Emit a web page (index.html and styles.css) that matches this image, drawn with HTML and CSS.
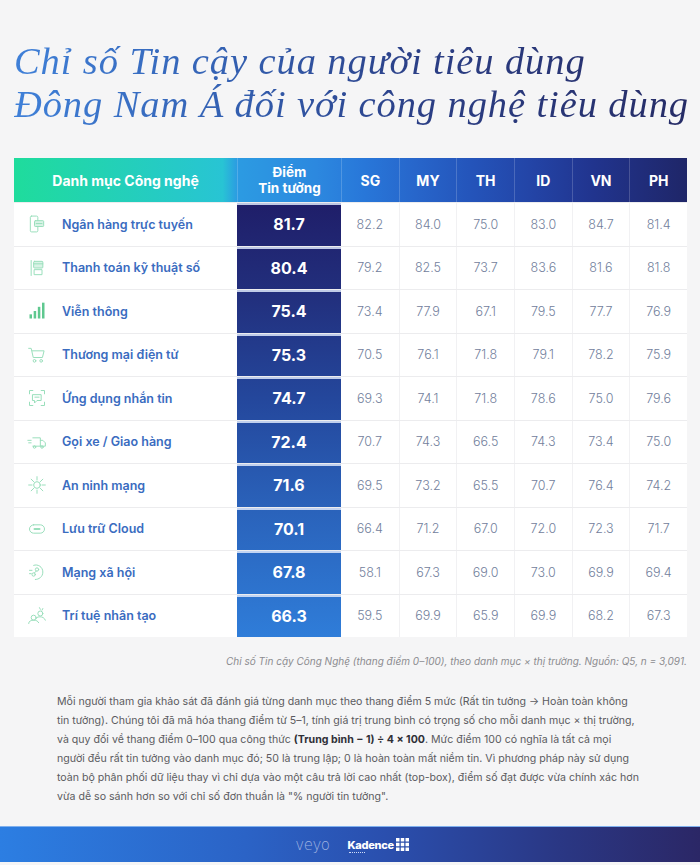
FILE: index.html
```html
<!DOCTYPE html>
<html lang="vi">
<head>
<meta charset="utf-8">
<title>Chỉ số Tin cậy</title>
<link rel="stylesheet" href="styles.css">
</head>
<body>
<div class="page">
  <h1 class="title"><span class="t-line">Chỉ số Tin cậy của người tiêu dùng</span><span class="t-line">Đông Nam Á đối với công nghệ tiêu dùng</span></h1>

  <div class="table">
    <div class="row head">
      <div class="cell cat-h">Danh mục Công nghệ</div>
      <div class="cell score-h">Điểm<br>Tin tưởng</div>
      <div class="cell c-h">SG</div>
      <div class="cell c-h">MY</div>
      <div class="cell c-h">TH</div>
      <div class="cell c-h">ID</div>
      <div class="cell c-h">VN</div>
      <div class="cell c-h">PH</div>
    </div>

    <div class="body">
      <div class="row">
        <div class="cell cat"><svg class="ico" viewBox="0 0 24 24"><rect x="4" y="2.5" width="9" height="19" rx="1.5"/><rect x="9" y="8" width="11" height="7" rx="1" class="fill"/><path d="M11 11.5h7"/></svg><span>Ngân hàng trực tuyến</span></div>
        <div class="cell score">81.7</div>
        <div class="cell num">82.2</div><div class="cell num">84.0</div><div class="cell num">75.0</div><div class="cell num">83.0</div><div class="cell num">84.7</div><div class="cell num">81.4</div>
      </div>
      <div class="row">
        <div class="cell cat"><svg class="ico" viewBox="0 0 24 24"><path d="M5 3v18"/><rect x="8" y="4" width="11" height="8" rx="1" class="fill"/><path d="M9 14h9v6H9z"/><path d="M8 7h11"/></svg><span>Thanh toán kỹ thuật số</span></div>
        <div class="cell score">80.4</div>
        <div class="cell num">79.2</div><div class="cell num">82.5</div><div class="cell num">73.7</div><div class="cell num">83.6</div><div class="cell num">81.6</div><div class="cell num">81.8</div>
      </div>
      <div class="row">
        <div class="cell cat"><svg class="ico bars" viewBox="0 0 24 24"><rect x="3" y="16" width="3" height="5"/><rect x="8" y="12" width="3" height="9"/><rect x="13" y="7" width="3" height="14"/><rect x="18" y="2" width="3" height="19"/></svg><span>Viễn thông</span></div>
        <div class="cell score">75.4</div>
        <div class="cell num">73.4</div><div class="cell num">77.9</div><div class="cell num">67.1</div><div class="cell num">79.5</div><div class="cell num">77.7</div><div class="cell num">76.9</div>
      </div>
      <div class="row">
        <div class="cell cat"><svg class="ico" viewBox="0 0 24 24"><path d="M2 4h3l2.5 11h11l2-8H6.5"/><circle cx="9" cy="19" r="1.6"/><circle cx="17" cy="19" r="1.6"/></svg><span>Thương mại điện tử</span></div>
        <div class="cell score">75.3</div>
        <div class="cell num">70.5</div><div class="cell num">76.1</div><div class="cell num">71.8</div><div class="cell num">79.1</div><div class="cell num">78.2</div><div class="cell num">75.9</div>
      </div>
      <div class="row">
        <div class="cell cat"><svg class="ico" viewBox="0 0 24 24"><path d="M3 7V3h4M17 3h4v4M21 17v4h-4M7 21H3v-4"/><path d="M7 8h10v7h-5l-3 3v-3H7z"/><path d="M9.5 11h5"/></svg><span>Ứng dụng nhắn tin</span></div>
        <div class="cell score">74.7</div>
        <div class="cell num">69.3</div><div class="cell num">74.1</div><div class="cell num">71.8</div><div class="cell num">78.6</div><div class="cell num">75.0</div><div class="cell num">79.6</div>
      </div>
      <div class="row">
        <div class="cell cat"><svg class="ico" viewBox="0 0 24 24"><path d="M7 7h9v10H7"/><path d="M16 10h3l3 3v4h-6"/><path d="M1 10h4M2 13h3"/><circle cx="9" cy="18" r="1.5"/><circle cx="18" cy="18" r="1.5"/></svg><span>Gọi xe / Giao hàng</span></div>
        <div class="cell score">72.4</div>
        <div class="cell num">70.7</div><div class="cell num">74.3</div><div class="cell num">66.5</div><div class="cell num">74.3</div><div class="cell num">73.4</div><div class="cell num">75.0</div>
      </div>
      <div class="row">
        <div class="cell cat"><svg class="ico" viewBox="0 0 24 24"><circle cx="12" cy="12" r="4"/><path d="M12 2v4M12 18v4M2 12h4M18 12h4M5 5l3 3M16 16l3 3M19 5l-3 3M8 16l-3 3"/></svg><span>An ninh mạng</span></div>
        <div class="cell score">71.6</div>
        <div class="cell num">69.5</div><div class="cell num">73.2</div><div class="cell num">65.5</div><div class="cell num">70.7</div><div class="cell num">76.4</div><div class="cell num">74.2</div>
      </div>
      <div class="row">
        <div class="cell cat"><svg class="ico" viewBox="0 0 24 24"><rect x="3" y="7" width="18" height="10" rx="5"/><path d="M9 12h6" class="thick"/></svg><span>Lưu trữ Cloud</span></div>
        <div class="cell score">70.1</div>
        <div class="cell num">66.4</div><div class="cell num">71.2</div><div class="cell num">67.0</div><div class="cell num">72.0</div><div class="cell num">72.3</div><div class="cell num">71.7</div>
      </div>
      <div class="row">
        <div class="cell cat"><svg class="ico" viewBox="0 0 24 24"><path d="M8 4c5-2 11 2 11 8s-5 9-9 9"/><circle cx="12" cy="9" r="2"/><circle cx="8" cy="15" r="2"/><path d="M11 11l-2 2"/><path d="M3 10h3M3 14h2"/></svg><span>Mạng xã hội</span></div>
        <div class="cell score">67.8</div>
        <div class="cell num">58.1</div><div class="cell num">67.3</div><div class="cell num">69.0</div><div class="cell num">73.0</div><div class="cell num">69.9</div><div class="cell num">69.4</div>
      </div>
      <div class="row">
        <div class="cell cat"><svg class="ico" viewBox="0 0 24 24"><circle cx="8" cy="14" r="3"/><circle cx="16" cy="9" r="3"/><path d="M2 21c0-3 3-4 6-4s5 1 6 3"/><path d="M11 15c1-2 3-2 5-2s5 1 6 4"/><path d="M15 2l1 2M19 3l-1 2"/></svg><span>Trí tuệ nhân tạo</span></div>
        <div class="cell score">66.3</div>
        <div class="cell num">59.5</div><div class="cell num">69.9</div><div class="cell num">65.9</div><div class="cell num">69.9</div><div class="cell num">68.2</div><div class="cell num">67.3</div>
      </div>
    </div>
  </div>

  <p class="caption">Chỉ số Tin cậy Công Nghệ (thang điểm 0–100), theo danh mục × thị trường. Nguồn: Q5, n = 3,091.</p>

  <p class="note">Mỗi người tham gia khảo sát đã đánh giá từng danh mục theo thang điểm 5 mức (Rất tin tưởng → Hoàn toàn không<br>tin tưởng). Chúng tôi đã mã hóa thang điểm từ 5–1, tính giá trị trung bình có trọng số cho mỗi danh mục × thị trường,<br>và quy đổi về thang điểm 0–100 qua công thức <b>(Trung bình − 1) ÷ 4 × 100</b>. Mức điểm 100 có nghĩa là tất cả mọi<br>người đều rất tin tưởng vào danh mục đó; 50 là trung lập; 0 là hoàn toàn mất niềm tin. Vì phương pháp này sử dụng<br>toàn bộ phân phối dữ liệu thay vì chỉ dựa vào một câu trả lời cao nhất (top-box), điểm số đạt được vừa chính xác hơn<br>vừa dễ so sánh hơn so với chỉ số đơn thuần là "% người tin tưởng".</p>
</div>

<footer class="footer">
  <span class="veyo">veyo</span>
  <span class="kadence">
    <span class="k-text">Kadence<span class="k-dots"></span></span>
    <svg class="k-grid" viewBox="0 0 13 13"><rect x="0" y="0" width="3.5" height="3.5"/><rect x="4.75" y="0" width="3.5" height="3.5"/><rect x="9.5" y="0" width="3.5" height="3.5"/><rect x="0" y="4.75" width="3.5" height="3.5"/><rect x="4.75" y="4.75" width="3.5" height="3.5"/><rect x="9.5" y="4.75" width="3.5" height="3.5"/><rect x="0" y="9.5" width="3.5" height="3.5"/><rect x="4.75" y="9.5" width="3.5" height="3.5"/><rect x="9.5" y="9.5" width="3.5" height="3.5"/></svg>
  </span>
</footer>
</body>
</html>
```

FILE: styles.css
```css
* { box-sizing: border-box; }
html, body { margin: 0; padding: 0; }
body {
  background: #f5f5f6;
  font-family: Inter, "Noto Sans", "DejaVu Sans", sans-serif;
  width: 700px;
  height: 865px;
  overflow: hidden;
}
.page { padding: 40px 13px 0 14px; }

.title {
  margin: 0;
  font-family: "Liberation Serif", "DejaVu Serif", serif;
  font-style: italic;
  font-weight: 400;
  font-size: 38.5px;
  line-height: 42.8px;
  letter-spacing: 0.9px;
  background: linear-gradient(90deg, #3f80d8 0%, #3462b4 30%, #2b3f86 60%, #262c66 100%);
  -webkit-background-clip: text;
  background-clip: text;
  color: transparent;
  width: max-content;
}
.t-line { display: block; }

.table {
  margin-top: 32.5px;
  width: 673px;
  background: #fff;
}
.row {
  display: grid;
  grid-template-columns: 223px 104px repeat(6, 1fr);
  height: 43.5px;
}
.cell {
  display: flex;
  align-items: center;
  justify-content: center;
}
.head {
  height: 44px;
  background: linear-gradient(90deg, #1fdc9c 0%, #28c4d4 31%, #2c9be2 33.2%, #2c88df 45%, #2877d9 52%, #2765ca 60%, #2454ba 68%, #2344a6 77%, #21348e 86%, #1f2668 100%);
  color: #fff;
  font-weight: 700;
}
.head .cell { border-left: 1px solid rgba(255,255,255,0.18); }
.head .cell:first-child { border-left: 0; }
.cat-h { font-size: 14px; }
.score-h { font-size: 13.5px; line-height: 16px; text-align: center; }
.c-h { font-size: 14px; }

.body .row { border-top: 1px solid #ececee; }
.cat {
  justify-content: flex-start;
  padding-left: 13px;
  gap: 15px;
  color: #3a6cbf;
  font-weight: 600;
  font-size: 12.5px;
}
.ico {
  width: 20px;
  height: 20px;
  fill: none;
  stroke: #9adfbc;
  stroke-width: 1.2;
  stroke-linecap: round;
  stroke-linejoin: round;
  flex: none;
}
.ico .fill { fill: #d9f3e6; }
.ico .thick { stroke-width: 2.4; }
.ico.bars { stroke: none; fill: #5fc88f; }

.score {
  color: #fff;
  font-weight: 700;
  font-size: 16px;
  background-image: linear-gradient(180deg, #1f1e69 0%, #22307e 22%, #24479c 45%, #2a62ba 70%, #2f7dd9 100%);
  background-size: 100% 435px;
  box-shadow: inset 0 2px 0 rgba(220,230,250,0.85);
}
.body .row:nth-child(2) .score { background-position: 0 -43.5px; }
.body .row:nth-child(3) .score { background-position: 0 -87px; }
.body .row:nth-child(4) .score { background-position: 0 -130.5px; }
.body .row:nth-child(5) .score { background-position: 0 -174px; }
.body .row:nth-child(6) .score { background-position: 0 -217.5px; }
.body .row:nth-child(7) .score { background-position: 0 -261px; }
.body .row:nth-child(8) .score { background-position: 0 -304.5px; }
.body .row:nth-child(9) .score { background-position: 0 -348px; }
.body .row:nth-child(10) .score { background-position: 0 -391.5px; }

.num {
  color: #72809c;
  font-weight: 300;
  font-size: 12.5px;
  border-left: 1px solid #f1f1f3;
}
.score + .num { border-left: 0; }

.caption {
  margin: 17px 0 0;
  text-align: right;
  font-style: italic;
  font-size: 10px;
  color: #8c8c90;
  line-height: 14px;
}
.note {
  margin: 24px 0 0 43px;
  width: 640px;
  font-size: 10.6px;
  line-height: 19px;
  color: #5b5b60;
}
.note b { color: #2f2f36; font-weight: 700; }

.footer {
  position: absolute;
  left: 0;
  top: 826px;
  width: 700px;
  height: 36px;
  border-top: 1px solid #7fb0ee;
  background: linear-gradient(90deg, #2c7ee2 0%, #2b63c6 35%, #2a4fae 55%, #2a3784 80%, #2b2766 100%);
  display: flex;
  align-items: center;
  justify-content: center;
  gap: 18px;
  padding-left: 4px;
}
.veyo {
  font-family: "DejaVu Sans", sans-serif;
  font-weight: 200;
  font-size: 15px;
  color: #9fb2e0;
  letter-spacing: -0.5px;
}
.kadence { display: flex; align-items: center; gap: 2px; }
.k-text {
  position: relative;
  font-weight: 800;
  font-size: 11px;
  color: #fff;
  letter-spacing: -0.3px;
}
.k-dots {
  position: absolute;
  left: 2px;
  top: 14px;
  width: 16px;
  border-top: 1px dotted #d0dcf8;
}
.k-grid { width: 13px; height: 13px; fill: #fff; }
```
